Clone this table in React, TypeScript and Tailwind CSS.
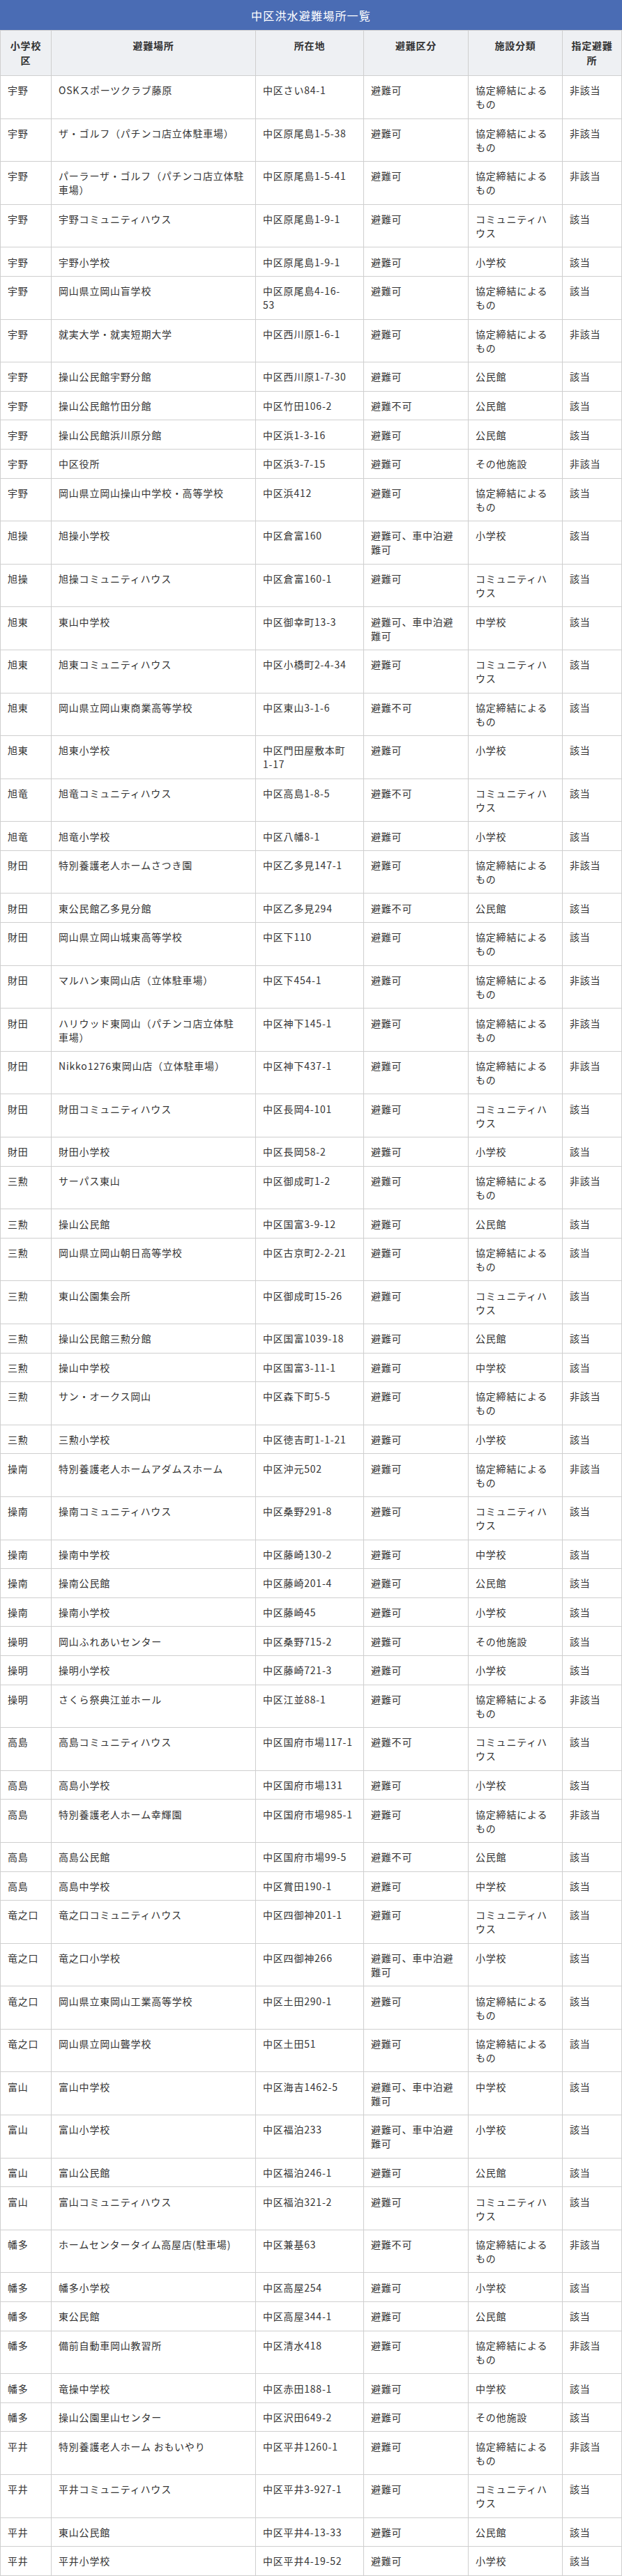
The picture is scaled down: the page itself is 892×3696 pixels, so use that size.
const A = '避難可';
const N = '避難不可';
const S = '避難可、車中泊避難可';
const K = '協定締結によるもの';
const C = 'コミュニティハウス';
const Y = '該当';
const X = '非該当';

type Row = [string, string, string, string, string, string];

const rows: Row[] = [
  ['宇野', 'OSKスポーツクラブ藤原', '中区さい84-1', A, K, X],
  ['宇野', 'ザ・ゴルフ（パチンコ店立体駐車場）', '中区原尾島1-5-38', A, K, X],
  ['宇野', 'パーラーザ・ゴルフ（パチンコ店立体駐\n車場）', '中区原尾島1-5-41', A, K, X],
  ['宇野', '宇野コミュニティハウス', '中区原尾島1-9-1', A, C, Y],
  ['宇野', '宇野小学校', '中区原尾島1-9-1', A, '小学校', Y],
  ['宇野', '岡山県立岡山盲学校', '中区原尾島4-16-\n53', A, K, Y],
  ['宇野', '就実大学・就実短期大学', '中区西川原1-6-1', A, K, X],
  ['宇野', '操山公民館宇野分館', '中区西川原1-7-30', A, '公民館', Y],
  ['宇野', '操山公民館竹田分館', '中区竹田106-2', N, '公民館', Y],
  ['宇野', '操山公民館浜川原分館', '中区浜1-3-16', A, '公民館', Y],
  ['宇野', '中区役所', '中区浜3-7-15', A, 'その他施設', X],
  ['宇野', '岡山県立岡山操山中学校・高等学校', '中区浜412', A, K, Y],
  ['旭操', '旭操小学校', '中区倉富160', S, '小学校', Y],
  ['旭操', '旭操コミュニティハウス', '中区倉富160-1', A, C, Y],
  ['旭東', '東山中学校', '中区御幸町13-3', S, '中学校', Y],
  ['旭東', '旭東コミュニティハウス', '中区小橋町2-4-34', A, C, Y],
  ['旭東', '岡山県立岡山東商業高等学校', '中区東山3-1-6', N, K, Y],
  ['旭東', '旭東小学校', '中区門田屋敷本町\n1-17', A, '小学校', Y],
  ['旭竜', '旭竜コミュニティハウス', '中区高島1-8-5', N, C, Y],
  ['旭竜', '旭竜小学校', '中区八幡8-1', A, '小学校', Y],
  ['財田', '特別養護老人ホームさつき園', '中区乙多見147-1', A, K, X],
  ['財田', '東公民館乙多見分館', '中区乙多見294', N, '公民館', Y],
  ['財田', '岡山県立岡山城東高等学校', '中区下110', A, K, Y],
  ['財田', 'マルハン東岡山店（立体駐車場）', '中区下454-1', A, K, X],
  ['財田', 'ハリウッド東岡山（パチンコ店立体駐\n車場）', '中区神下145-1', A, K, X],
  ['財田', 'Nikko1276東岡山店（立体駐車場）', '中区神下437-1', A, K, X],
  ['財田', '財田コミュニティハウス', '中区長岡4-101', A, C, Y],
  ['財田', '財田小学校', '中区長岡58-2', A, '小学校', Y],
  ['三勲', 'サーパス東山', '中区御成町1-2', A, K, X],
  ['三勲', '操山公民館', '中区国富3-9-12', A, '公民館', Y],
  ['三勲', '岡山県立岡山朝日高等学校', '中区古京町2-2-21', A, K, Y],
  ['三勲', '東山公園集会所', '中区御成町15-26', A, C, Y],
  ['三勲', '操山公民館三勲分館', '中区国富1039-18', A, '公民館', Y],
  ['三勲', '操山中学校', '中区国富3-11-1', A, '中学校', Y],
  ['三勲', 'サン・オークス岡山', '中区森下町5-5', A, K, X],
  ['三勲', '三勲小学校', '中区徳吉町1-1-21', A, '小学校', Y],
  ['操南', '特別養護老人ホームアダムスホーム', '中区沖元502', A, K, X],
  ['操南', '操南コミュニティハウス', '中区桑野291-8', A, C, Y],
  ['操南', '操南中学校', '中区藤崎130-2', A, '中学校', Y],
  ['操南', '操南公民館', '中区藤崎201-4', A, '公民館', Y],
  ['操南', '操南小学校', '中区藤崎45', A, '小学校', Y],
  ['操明', '岡山ふれあいセンター', '中区桑野715-2', A, 'その他施設', Y],
  ['操明', '操明小学校', '中区藤崎721-3', A, '小学校', Y],
  ['操明', 'さくら祭典江並ホール', '中区江並88-1', A, K, X],
  ['高島', '高島コミュニティハウス', '中区国府市場117-1', N, C, Y],
  ['高島', '高島小学校', '中区国府市場131', A, '小学校', Y],
  ['高島', '特別養護老人ホーム幸輝園', '中区国府市場985-1', A, K, X],
  ['高島', '高島公民館', '中区国府市場99-5', N, '公民館', Y],
  ['高島', '高島中学校', '中区賞田190-1', A, '中学校', Y],
  ['竜之口', '竜之口コミュニティハウス', '中区四御神201-1', A, C, Y],
  ['竜之口', '竜之口小学校', '中区四御神266', S, '小学校', Y],
  ['竜之口', '岡山県立東岡山工業高等学校', '中区土田290-1', A, K, Y],
  ['竜之口', '岡山県立岡山聾学校', '中区土田51', A, K, Y],
  ['富山', '富山中学校', '中区海吉1462-5', S, '中学校', Y],
  ['富山', '富山小学校', '中区福泊233', S, '小学校', Y],
  ['富山', '富山公民館', '中区福泊246-1', A, '公民館', Y],
  ['富山', '富山コミュニティハウス', '中区福泊321-2', A, C, Y],
  ['幡多', 'ホームセンタータイム高屋店(駐車場)', '中区兼基63', N, K, X],
  ['幡多', '幡多小学校', '中区高屋254', A, '小学校', Y],
  ['幡多', '東公民館', '中区高屋344-1', A, '公民館', Y],
  ['幡多', '備前自動車岡山教習所', '中区清水418', A, K, X],
  ['幡多', '竜操中学校', '中区赤田188-1', A, '中学校', Y],
  ['幡多', '操山公園里山センター', '中区沢田649-2', A, 'その他施設', Y],
  ['平井', '特別養護老人ホーム おもいやり', '中区平井1260-1', A, K, X],
  ['平井', '平井コミュニティハウス', '中区平井3-927-1', A, C, Y],
  ['平井', '東山公民館', '中区平井4-13-33', A, '公民館', Y],
  ['平井', '平井小学校', '中区平井4-19-52', A, '小学校', Y],
];

const headers = ['小学校区', '避難場所', '所在地', '避難区分', '施設分類', '指定避難所'];

export default function App() {
  return (
    <div className="w-[892px] bg-white font-['Noto_Sans_CJK_JP',sans-serif] text-[#333]">
      <div className="flex h-[43px] items-center justify-center bg-[#4a6cb4] text-[16px] tracking-[1.2px] text-white">
        中区洪水避難場所一覧
      </div>
      <table className="w-full table-fixed border-collapse text-[14px] leading-[20px] tracking-[0.8px]">
        <colgroup>
          <col className="w-[73px]" />
          <col className="w-[293px]" />
          <col className="w-[155px]" />
          <col className="w-[150px]" />
          <col className="w-[135px]" />
          <col />
        </colgroup>
        <thead>
          <tr className="bg-[#eef0f3]">
            {headers.map((h) => (
              <th
                key={h}
                className="border border-[#cfcfcf] px-[10px] py-[11px] text-center align-top font-bold leading-[21px]"
              >
                {h}
              </th>
            ))}
          </tr>
        </thead>
        <tbody>
          {rows.map((r, i) => (
            <tr key={i}>
              {r.map((cell, j) => (
                <td
                  key={j}
                  className="border border-[#cfcfcf] px-[10px] py-[10.3px] text-left align-top whitespace-pre-line"
                >
                  {cell}
                </td>
              ))}
            </tr>
          ))}
        </tbody>
      </table>
    </div>
  );
}
